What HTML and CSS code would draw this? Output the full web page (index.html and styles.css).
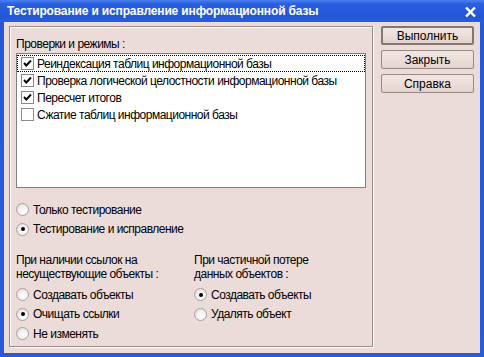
FILE: index.html
```html
<!DOCTYPE html>
<html lang="ru">
<head>
<meta charset="utf-8">
<title>Тестирование и исправление информационной базы</title>
<link rel="stylesheet" href="styles.css">
</head>
<body>
<div class="window">
  <div class="titlebar">
    <span class="title">Тестирование и исправление информационной базы</span>
    <span class="close">
      <svg width="11" height="10" viewBox="0 0 11 10"><path d="M1 0.5 L10 9.5 M10 0.5 L1 9.5" stroke="#fff" stroke-width="2.4" fill="none"/></svg>
    </span>
  </div>
  <div class="client">
    <div class="group">
      <div class="label">Проверки и режимы :</div>
      <div class="listbox">
        <div class="item focused"><span class="check on"><svg width="11" height="11" viewBox="0 0 11 11"><path d="M2 5 L4.3 7.5 L9 2.5" stroke="#000" stroke-width="1.9" fill="none"/></svg></span>Реиндексация таблиц информационной базы</div>
        <div class="item"><span class="check on"><svg width="11" height="11" viewBox="0 0 11 11"><path d="M2 5 L4.3 7.5 L9 2.5" stroke="#000" stroke-width="1.9" fill="none"/></svg></span>Проверка логической целостности информационной базы</div>
        <div class="item"><span class="check on"><svg width="11" height="11" viewBox="0 0 11 11"><path d="M2 5 L4.3 7.5 L9 2.5" stroke="#000" stroke-width="1.9" fill="none"/></svg></span>Пересчет итогов</div>
        <div class="item"><span class="check"></span>Сжатие таблиц информационной базы</div>
      </div>
      <div class="modes">
        <div class="radio"><span class="dot"></span>Только тестирование</div>
        <div class="radio"><span class="dot on"></span>Тестирование и исправление</div>
      </div>
      <div class="options">
        <div class="col">
          <div class="caption">При наличии ссылок на<br>несуществующие объекты :</div>
          <div class="radio"><span class="dot"></span>Создавать объекты</div>
          <div class="radio"><span class="dot on"></span>Очищать ссылки</div>
          <div class="radio"><span class="dot"></span>Не изменять</div>
        </div>
        <div class="col">
          <div class="caption">При частичной потере<br>данных объектов :</div>
          <div class="radio"><span class="dot on"></span>Создавать объекты</div>
          <div class="radio"><span class="dot"></span>Удалять объект</div>
        </div>
      </div>
    </div>
    <div class="buttons">
      <div class="btn default">Выполнить</div>
      <div class="btn">Закрыть</div>
      <div class="btn">Справка</div>
    </div>
  </div>
</div>
</body>
</html>
```
FILE: styles.css
```css
* { box-sizing: border-box; }
html, body { margin: 0; padding: 0; background: #2b5bd6; }
body {
  font-family: "Liberation Sans", Arial, sans-serif;
  font-size: 12px;
  letter-spacing: -0.5px;
  color: #000;
}
.window {
  width: 484px;
  height: 357px;
  display: flex;
  flex-direction: column;
  background: linear-gradient(to bottom, #3a6fe8 0, #2557d6 10px, #2a5ad8 100%);
}
.titlebar {
  height: 22px;
  flex: none;
  display: flex;
  align-items: center;
  justify-content: space-between;
  padding: 0 8px 0 7px;
  background: linear-gradient(to bottom, #4a80f0 0, #2a60e0 4px, #2356d8 16px, #2a5cda 22px);
}
.title {
  color: #fff;
  font-weight: bold;
  font-size: 12px;
  letter-spacing: -0.15px;
  white-space: nowrap;
}
.close { display: flex; margin-top: 1px; }
.client {
  flex: 1;
  margin: 0 4px 4px 4px;
  background: #ecdcd9;
  display: flex;
  padding: 4px 6px 6px 5px;
}
.group {
  width: 364px;
  flex: none;
  border: 1px solid #9a8a86;
  box-shadow: inset 1px 1px 0 #fff, 1px 1px 0 #fff;
  padding: 10px 6px 0 6px;
}
.label { line-height: 14px; height: 14px; margin-bottom: 2px; white-space: nowrap; }
.listbox {
  height: 135px;
  background: #fff;
  border: 1px solid #7f7f7f;
  padding: 1px 0 0 0;
}
.item {
  height: 17px;
  display: flex;
  align-items: center;
  white-space: nowrap;
  padding-left: 3px;
  border: 1px solid transparent;
}
.item.focused { border: 1px dotted #000; }
.check {
  width: 13px;
  height: 13px;
  border: 1px solid #8a8a8a;
  background: #fff;
  margin-right: 3px;
  display: flex;
  align-items: center;
  justify-content: center;
  flex: none;
}
.modes { margin-top: 12px; }
.radio {
  height: 19.5px;
  display: flex;
  align-items: center;
  white-space: nowrap;
}
.dot {
  width: 13px;
  height: 13px;
  border-radius: 50%;
  border: 1px solid #a7a0a0;
  background: radial-gradient(circle at 60% 65%, #fff 0, #f4f2f2 40%, #d8d4d4 100%);
  margin-right: 4px;
  flex: none;
  position: relative;
}
.dot.on::after {
  content: "";
  position: absolute;
  left: 3.5px;
  top: 3.5px;
  width: 4px;
  height: 4px;
  border-radius: 50%;
  background: #000;
}
.options {
  display: grid;
  grid-template-columns: 178px 1fr;
  margin-top: 14px;
}
.caption { line-height: 14px; margin-bottom: 4px; white-space: nowrap; }
.buttons {
  margin-left: 8px;
  display: flex;
  flex-direction: column;
  gap: 5px;
  width: 94px;
  padding-top: 0;
}
.btn {
  height: 19px;
  display: flex;
  align-items: center;
  justify-content: center;
  border: 1px solid #968884;
  border-radius: 2px;
  letter-spacing: 0;
  background: linear-gradient(to bottom, #f2e6e2 0, #eadcd7 60%, #e0d1cc 100%);
}
.btn.default {
  border: 2px solid #857672;
}
```
